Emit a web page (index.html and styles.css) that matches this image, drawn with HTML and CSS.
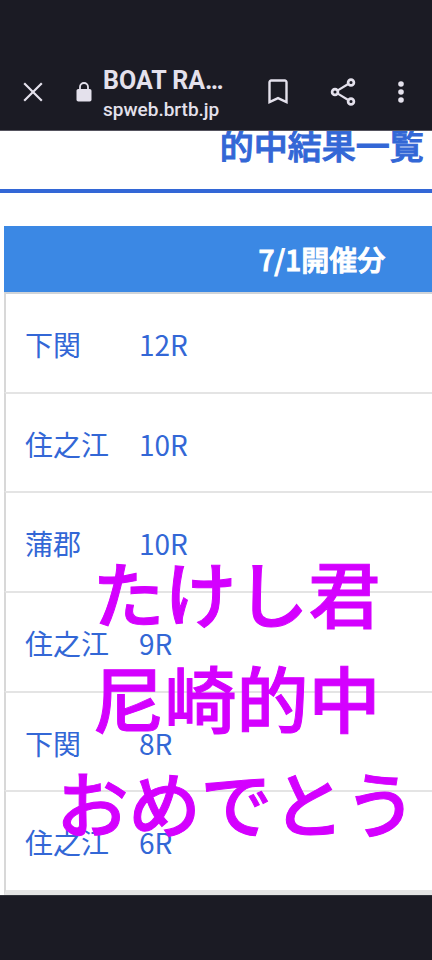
FILE: index.html
```html
<!DOCTYPE html>
<html lang="ja">
<head>
<meta charset="utf-8">
<meta name="viewport" content="width=device-width, initial-scale=1">
<title>BOAT RACE 的中結果一覧</title>
<link rel="stylesheet" href="styles.css">
</head>
<body>
<header class="toolbar">
  <button class="icon-button" type="button" aria-label="閉じる">
    <svg width="20" height="20" viewBox="0 0 20 20" fill="none" stroke="currentColor" stroke-width="2.2"><path d="M1.2 1.2 18.8 18.8M18.8 1.2 1.2 18.8"/></svg>
  </button>
  <svg class="lock" width="16" height="20" viewBox="0 0 16 20"><path d="M4 8V5a4 4 0 0 1 8 0v3" fill="none" stroke="currentColor" stroke-width="1.8"/><rect x="0.5" y="7" width="15" height="12.5" rx="1.8" fill="currentColor"/></svg>
  <div class="site">
    <div class="site-title">BOAT RACE 的中結果一覧</div>
    <div class="site-host">spweb.brtb.jp</div>
  </div>
  <div class="actions">
    <button class="icon-button" type="button" aria-label="ブックマーク">
      <svg width="20" height="26" viewBox="0 0 20 26" fill="none" stroke="currentColor" stroke-width="2.4"><path d="M1.5 23.2V3.2a1.7 1.7 0 0 1 1.7-1.7h13.6a1.7 1.7 0 0 1 1.7 1.7v20L10 19.2Z"/></svg>
    </button>
    <button class="icon-button" type="button" aria-label="共有">
      <svg width="26" height="28" viewBox="0 0 26 28" fill="none" stroke="currentColor" stroke-width="2.2"><path d="M7.4 12.6 17.8 6.3M7.4 15.4 17.8 21.7"/><circle cx="5" cy="14" r="2.9" stroke-width="2.7"/><circle cx="21" cy="4.5" r="2.9" stroke-width="2.7"/><circle cx="21" cy="23.5" r="2.9" stroke-width="2.7"/></svg>
    </button>
    <button class="icon-button" type="button" aria-label="メニュー">
      <svg width="6" height="24" viewBox="0 0 6 24" fill="currentColor"><circle cx="3" cy="4" r="2.8"/><circle cx="3" cy="12" r="2.8"/><circle cx="3" cy="20" r="2.8"/></svg>
    </button>
  </div>
</header>
<main class="viewport">
  <div class="page">
    <h1 class="page-title">的中結果一覧</h1>
    <table class="results">
      <thead><tr><th colspan="2">7/1開催分</th></tr></thead>
      <tbody>
        <tr><td class="venue"><a href="#r1">下関</a></td><td><a href="#r1">12R</a></td></tr>
        <tr><td class="venue"><a href="#r2">住之江</a></td><td><a href="#r2">10R</a></td></tr>
        <tr><td class="venue"><a href="#r3">蒲郡</a></td><td><a href="#r3">10R</a></td></tr>
        <tr><td class="venue"><a href="#r4">住之江</a></td><td><a href="#r4">9R</a></td></tr>
        <tr><td class="venue"><a href="#r5">下関</a></td><td><a href="#r5">8R</a></td></tr>
        <tr><td class="venue"><a href="#r6">住之江</a></td><td><a href="#r6">6R</a></td></tr>
      </tbody>
    </table>
  </div>
  <p class="message">たけし君<br>尼崎的中<br>おめでとう</p>
</main>
<footer class="system-bar"></footer>
</body>
</html>
```
FILE: styles.css
```css
* {
  box-sizing: border-box;
}

body {
  margin: 0;
  min-height: 100vh;
  display: flex;
  flex-direction: column;
  background: #1b1b24;
  font-family: "Noto Sans CJK JP", sans-serif;
}

.toolbar {
  display: flex;
  align-items: center;
  padding: 64px 28px 8px 23px;
  border-bottom: 1px solid #55545e;
  color: #e4e1ec;
  font-family: Roboto, "Noto Sans CJK JP", sans-serif;
}

.icon-button {
  display: flex;
  padding: 0;
  border: 0;
  background: none;
  color: inherit;
}

.toolbar svg {
  display: block;
  flex: none;
  margin-bottom: 2px;
}

.lock {
  margin-left: 33px;
}

.site {
  width: 124px;
  margin-left: 11px;
}

.site-title {
  overflow: hidden;
  white-space: nowrap;
  text-overflow: ellipsis;
  font-size: 25px;
  font-weight: 700;
  line-height: 34px;
}

.site-host {
  font-size: 19px;
  font-weight: 500;
  line-height: 24px;
}

.actions {
  flex: 1;
  display: flex;
  align-items: center;
  justify-content: space-between;
  margin-left: 41px;
}

.viewport {
  position: relative;
  flex: 1;
  overflow: hidden;
  background: #fff;
}

/* The page is wider than the window and runs off its right edge. */
.page {
  width: 149%;
}

.page-title {
  margin: 0 0 33px;
  padding-bottom: 31px;
  border-bottom: 4px solid #3367d6;
  color: #3367d6;
  font-size: 34px;
  font-weight: 500;
  -webkit-text-stroke: 1px currentColor;
  line-height: 27px;
  text-align: center;
}

.results {
  width: calc(100% - 8px);
  margin: 0 4px;
  border-collapse: separate;
  border-spacing: 0;
  font-size: 28px;
  line-height: 40px;
}

.results th {
  height: 66px;
  padding: 0;
  background: #3b88e4;
  color: #fff;
  font-weight: 500;
  -webkit-text-stroke: 1px currentColor;
}

.results td {
  height: 100px;
  padding: 2px 0 0;
  border-top: 2px solid #e4e4e4;
}

.results tr:nth-child(3n - 1) td {
  height: 99px;
}

.results tr:first-child td {
  border-top-color: #d0d4d8;
}

.results tr:last-child td {
  height: 105px;
  border-bottom: 5px solid #e4e4e4;
}

.results .venue {
  width: 135px;
  padding-left: 19px;
  border-left: 2px solid #d8d8d8;
}

.results a {
  color: #3367d6;
  text-decoration: none;
}

.message {
  position: absolute;
  top: 407px;
  left: 0;
  right: 0;
  margin: 0;
  padding-left: 41px;
  color: #d400ff;
  font-size: 72px;
  font-weight: 500;
  -webkit-text-stroke: 1px currentColor;
  line-height: 105px;
  text-align: center;
}

.system-bar {
  height: 65px;
  border-top: 1px solid #30323a;
}
```
